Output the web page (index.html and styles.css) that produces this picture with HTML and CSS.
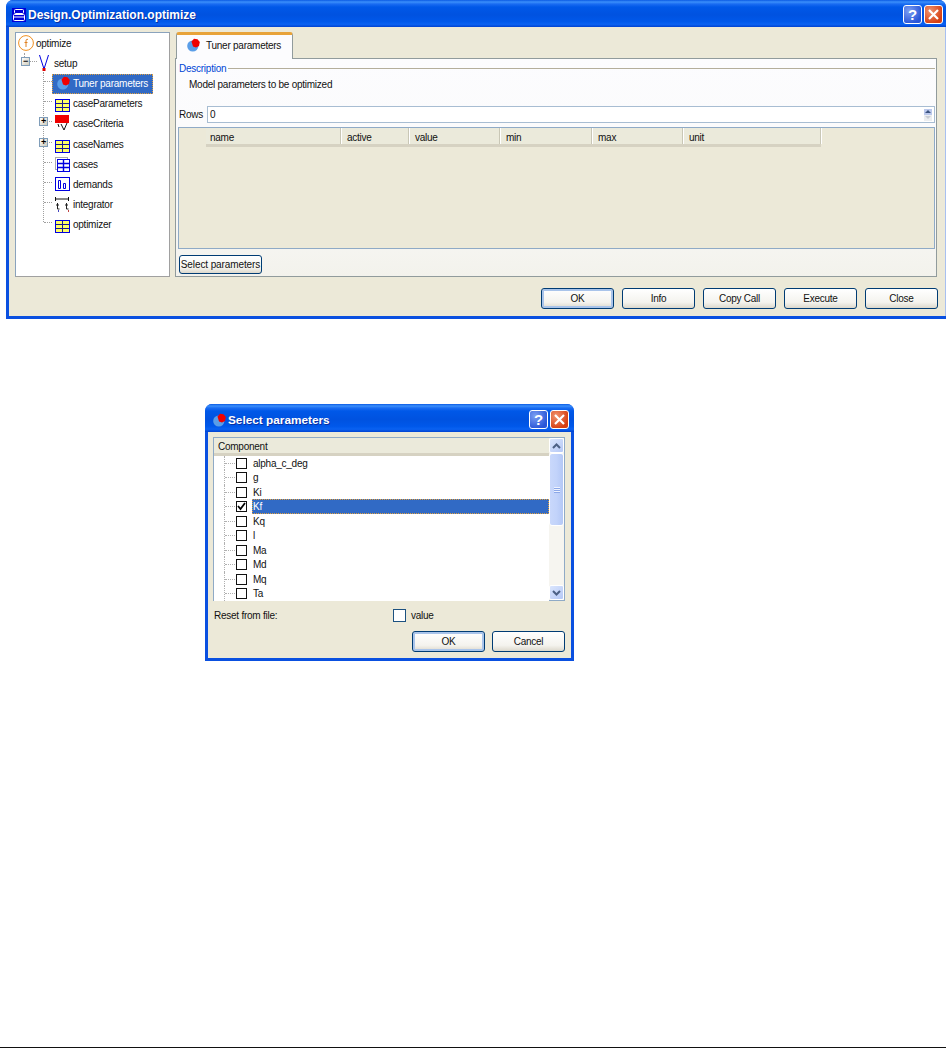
FILE: index.html
```html
<!DOCTYPE html>
<html lang="en">
<head>
<meta charset="utf-8">
<title>Design.Optimization.optimize</title>
<link rel="stylesheet" href="styles.css">
</head>
<body>
<svg class="defs" width="0" height="0" aria-hidden="true">
  <defs>
    <symbol id="i-table" viewBox="0 0 15 13">
      <rect x="0.5" y="0.5" width="14" height="12" fill="#ffff66" stroke="#0000e0"/>
      <path d="M1 4.5H14M1 8.5H14M7.5 1V12" stroke="#1a1a90" fill="none"/>
    </symbol>
    <symbol id="i-tuner" viewBox="0 0 13 14">
      <circle cx="5.8" cy="8" r="5.6" fill="#5a9ee8"/>
      <path d="M4.5 3.5 7 .8l3.5.4L12.8 4 12 8l-3 1.6-3-1.2z" fill="#f00000"/>
    </symbol>
  </defs>
</svg>

<section class="win main-win">
  <header class="titlebar">
    <svg class="title-icon" width="14" height="14" viewBox="0 0 14 14"><rect width="14" height="14" fill="#0000d8"/><rect x="2.5" y="1.5" width="9" height="4" rx="1" fill="#0000d8" stroke="#fff"/><rect x="1.5" y="6.5" width="11" height="6" rx="1" fill="#0000d8" stroke="#fff"/><path d="M2 9h10" stroke="#fff"/></svg>
    <h1 class="title-text">Design.Optimization.optimize</h1>
    <span class="cap cap-help">?</span>
    <span class="cap cap-close"><svg width="11" height="11" viewBox="0 0 11 11"><path d="M1 1l9 9M10 1l-9 9" stroke="#fff" stroke-width="2.2"/></svg></span>
  </header>
  <div class="client">
    <div class="work">
      <nav class="tree">
        <span class="guide"></span>
        <span class="guide-top"></span>
        <div class="node lv0">
          <svg class="ico" width="16" height="16" viewBox="0 0 16 16"><circle cx="8" cy="8" r="7.4" fill="#fff" stroke="#f09020"/><path d="M10 4.5C8.5 3.8 8 4.6 8 6v6M6.5 7.5h3" fill="none" stroke="#e08020"/></svg>
          <span>optimize</span>
        </div>
        <div class="node lv1">
          <span class="exp">&#8722;</span><span class="dash"></span>
          <svg class="ico" width="13" height="18" viewBox="0 0 13 18"><path d="M1.5 1 6 15 10.5 1" fill="none" stroke="#0000e0"/><rect x="4.5" y="14" width="3" height="3" fill="#e00000"/></svg>
          <span class="lab">setup</span>
        </div>
        <div class="node lv2">
          <span class="dash"></span>
          <span class="selected">
            <svg class="ico" width="13" height="14"><use href="#i-tuner"/></svg>
            <span class="lab">Tuner parameters</span>
          </span>
        </div>
        <div class="node lv2">
          <span class="dash"></span>
          <svg class="ico ico-low" width="15" height="13"><use href="#i-table"/></svg>
          <span class="lab">caseParameters</span>
        </div>
        <div class="node lv2">
          <span class="exp">+</span><span class="dash"></span>
          <svg class="ico" width="15" height="16" viewBox="0 0 15 16"><path d="M6 9 9 15 12 8M3 9l1 3" fill="none" stroke="#111"/><rect y="0" width="14" height="8" fill="#f00000"/></svg>
          <span class="lab">caseCriteria</span>
        </div>
        <div class="node lv2 node-gap">
          <span class="exp">+</span><span class="dash"></span>
          <svg class="ico ico-low" width="15" height="13"><use href="#i-table"/></svg>
          <span class="lab">caseNames</span>
        </div>
        <div class="node lv2">
          <span class="dash"></span>
          <svg class="ico" width="15" height="15" viewBox="0 0 15 15"><rect x="0.5" y="0.5" width="12" height="12" fill="#fff" stroke="#aaa"/><rect x="2.5" y="2.5" width="12" height="12" fill="#fff" stroke="#0000e0"/><path d="M3 6.5h11M3 10.5h11M8.5 3v11" stroke="#0000e0" stroke-width="1.4"/></svg>
          <span class="lab">cases</span>
        </div>
        <div class="node lv2">
          <span class="dash"></span>
          <svg class="ico" width="15" height="14" viewBox="0 0 15 14"><rect x="0.5" y="0.5" width="14" height="13" fill="#fff" stroke="#0000e0"/><path d="M3.5 3.5h2v8h-2zM8.5 6.5h2v5h-2z" fill="none" stroke="#0000e0"/></svg>
          <span class="lab">demands</span>
        </div>
        <div class="node lv2">
          <span class="dash"></span>
          <svg class="ico" width="15" height="15" viewBox="0 0 15 15"><path d="M.5 0v4M13.5 0v4M0 2h14" stroke="#111" fill="none"/><path d="M2.5 6v6h2M1 8h3M11.5 6v6h2M10 8h3" stroke="#222" fill="none"/><path d="M3.5 13v2" stroke="#4444c0"/><path d="M13.5 13v2" stroke="#c04444"/></svg>
          <span class="lab">integrator</span>
        </div>
        <div class="node lv2">
          <span class="dash"></span>
          <svg class="ico ico-low" width="15" height="13"><use href="#i-table"/></svg>
          <span class="lab">optimizer</span>
        </div>
      </nav>
      <div class="tabs">
        <div class="tab">
          <svg class="tab-icon" width="13" height="14"><use href="#i-tuner"/></svg>
          <span>Tuner parameters</span>
        </div>
        <div class="tab-panel">
          <div class="legend"><span class="legend-text">Description</span><span class="legend-line"></span></div>
          <p class="desc">Model parameters to be optimized</p>
          <div class="rows-row">
            <label class="rows-label">Rows</label>
            <div class="rows-input">
              <span>0</span>
              <span class="spin"><span class="spin-up"></span><span class="spin-down"></span></span>
            </div>
          </div>
          <div class="grid-area">
            <div class="grid-head">
              <span>name</span><span>active</span><span>value</span><span>min</span><span>max</span><span>unit</span>
            </div>
          </div>
          <button class="btn btn-small" type="button">Select parameters</button>
        </div>
      </div>
    </div>
    <div class="actions">
      <button class="btn btn-default" type="button">OK</button>
      <button class="btn" type="button">Info</button>
      <button class="btn" type="button">Copy Call</button>
      <button class="btn" type="button">Execute</button>
      <button class="btn" type="button">Close</button>
    </div>
  </div>
</section>

<section class="win dialog-win">
  <header class="titlebar">
    <svg class="title-icon-d" width="13" height="14"><use href="#i-tuner"/></svg>
    <h2 class="title-text">Select parameters</h2>
    <span class="cap cap-help">?</span>
    <span class="cap cap-close"><svg width="11" height="11" viewBox="0 0 11 11"><path d="M1 1l9 9M10 1l-9 9" stroke="#fff" stroke-width="2.2"/></svg></span>
  </header>
  <div class="client client-d">
    <div class="listbox">
      <div class="list-main">
        <div class="list-head">Component</div>
        <ul class="list-rows">
          <li class="item"><span class="check"></span><span class="item-lab">alpha_c_deg</span></li>
          <li class="item"><span class="check"></span><span class="item-lab">g</span></li>
          <li class="item"><span class="check"></span><span class="item-lab">Ki</span></li>
          <li class="item"><span class="check"><svg width="9" height="9" viewBox="0 0 9 9"><path d="M1 4l2.5 3L8 1" fill="none" stroke="#000" stroke-width="1.8"/></svg></span><span class="item-lab selected-row">Kf</span></li>
          <li class="item"><span class="check"></span><span class="item-lab">Kq</span></li>
          <li class="item"><span class="check"></span><span class="item-lab">l</span></li>
          <li class="item"><span class="check"></span><span class="item-lab">Ma</span></li>
          <li class="item"><span class="check"></span><span class="item-lab">Md</span></li>
          <li class="item"><span class="check"></span><span class="item-lab">Mq</span></li>
          <li class="item"><span class="check"></span><span class="item-lab">Ta</span></li>
        </ul>
      </div>
      <div class="scrollbar">
        <span class="sb-btn"><svg width="9" height="6" viewBox="0 0 9 6"><path d="M1 5l3.5-3.5L8 5" fill="none" stroke="#4d6185" stroke-width="2"/></svg></span>
        <span class="sb-thumb"><i></i><i></i><i></i></span>
        <span class="sb-track"></span>
        <span class="sb-btn"><svg width="9" height="6" viewBox="0 0 9 6"><path d="M1 1l3.5 3.5L8 1" fill="none" stroke="#4d6185" stroke-width="2"/></svg></span>
      </div>
    </div>
    <div class="reset-row">
      <span class="reset-label">Reset from file:</span>
      <span class="xp-check"></span>
      <span>value</span>
    </div>
    <div class="actions-d">
      <button class="btn btn-default" type="button">OK</button>
      <button class="btn" type="button">Cancel</button>
    </div>
  </div>
</section>

<hr class="page-rule">
</body>
</html>
```

FILE: styles.css
```css
* { box-sizing: border-box; }
html, body { margin: 0; padding: 0; }
body {
  width: 946px;
  height: 1048px;
  background: #fff;
  display: flex;
  flex-direction: column;
  align-items: flex-start;
  overflow: hidden;
  font: 10px/13px "Liberation Sans", Arial, sans-serif;
  letter-spacing: -0.25px;
  color: #111;
}
.defs { position: absolute; }

.win {
  display: flex;
  flex-direction: column;
  border-radius: 7px 7px 0 0;
  background: #0a50e0;
  flex: none;
}
.main-win { width: 940px; height: 319px; margin-left: 6px; }
.dialog-win { width: 369px; height: 257px; margin: 85px 0 0 205px; }

.titlebar {
  display: flex;
  align-items: center;
  flex: none;
  height: 27px;
  padding: 2px 3px 0 6px;
  border-radius: 7px 7px 0 0;
  background: linear-gradient(180deg, #0a5ae4 0, #3b8ffb 2px, #1a6cf2 4px, #0058e8 7px, #0052e0 55%, #0058ea 80%, #0a62f2 90%, #0042d0 100%);
}
.dialog-win .titlebar { height: 28px; padding: 3px 5px 0 8px; }
.title-icon { flex: none; margin-right: 2px; }
.title-icon-d { flex: none; margin-right: 2px; }
.title-text {
  margin: 0;
  flex: 1;
  font: bold 12px/16px "Liberation Sans", Arial, sans-serif;
  letter-spacing: 0;
  color: #fff;
  text-shadow: 1px 1px 0 #0a2fa0;
}
.dialog-win .title-text { font-size: 11.8px; }
.cap {
  display: flex;
  align-items: center;
  justify-content: center;
  flex: none;
  width: 19px;
  height: 19px;
  margin-left: 2px;
  border: 1px solid #fff;
  border-radius: 3px;
  color: #fff;
  font: bold 15px/16px "Liberation Sans", Arial, sans-serif;
}
.cap-help { background: radial-gradient(circle at 30% 30%, #7d9ff2, #2a56d8 75%); }
.cap-close { background: radial-gradient(circle at 30% 30%, #f0936f, #d63f12 75%); }

.client {
  flex: 1;
  display: flex;
  flex-direction: column;
  margin: 0 1px 3px 3px;
  padding: 5px 0 0 6px;
  background: #ece9d8;
}
.main-win .client { box-shadow: 1px 0 0 #a8c0f0; }

.work { display: flex; gap: 5px; height: 245px; flex: none; }

/* tree */
.tree {
  position: relative;
  width: 155px;
  flex: none;
  background: #fff;
  border: 1px solid #8aa3bd;
  border-right-color: #a0a0a0;
  border-bottom-color: #a0a0a0;
}
.guide {
  position: absolute;
  left: 27px;
  top: 39px;
  height: 150px;
  width: 16px;
  border-left: 1px dotted #a0a0a0;
}
.guide-top {
  position: absolute;
  left: 8px;
  top: 20px;
  height: 4px;
  border-left: 1px dotted #a0a0a0;
}
.node {
  position: relative;
  display: flex;
  align-items: center;
  height: 20px;
}
.node-gap { margin-top: 1px; }
.lv0 { padding-left: 2px; }
.lv0 .ico { margin-right: 2px; }
.lv1 { padding-left: 5px; }
.lv1 .dash { left: 14px; width: 7px; }
.lv1 .ico { margin-left: 17px; flex: none; }
.lv1 .lab { margin-left: 3px; }
.lv2 { padding-left: 39px; }
.lv2 .ico { margin-right: 3px; flex: none; }
.lv2 .ico-low { transform: translateY(2px); }
.lv2 .exp { left: 23px; }
.lv1 .exp { left: 5px; }
.exp {
  position: absolute;
  top: 4px;
  display: flex;
  align-items: center;
  justify-content: center;
  width: 9px;
  height: 9px;
  border: 1px solid #7f9db9;
  background: linear-gradient(135deg, #fff, #cfcbbb);
  font: bold 9px/7px "Liberation Sans", sans-serif;
  color: #000;
}
.dash {
  position: absolute;
  left: 28px;
  top: 8px;
  width: 8px;
  border-top: 1px dotted #a0a0a0;
}
.lab { white-space: nowrap; }
.lv2 .selected {
  display: flex;
  align-items: center;
  flex: none;
  position: relative;
  width: 101px;
  height: 20px;
  margin: 2px 0 0 -3px;
  padding: 0 0 2px 5px;
  background: #316ac5;
  color: #fff;
  outline: 1px dotted #e0a040;
  outline-offset: -1px;
}
.lv2 .selected .ico { margin-right: 3px; }

/* tab */
.tabs { flex: 1; display: flex; flex-direction: column; margin-right: 8px; }
.tab {
  display: flex;
  align-items: center;
  gap: 6px;
  width: 117px;
  height: 27px;
  margin: 0 0 -1px 1px;
  padding: 0 0 4px 10px;
  background: #fcfcfe;
  border: 1px solid #919b9c;
  border-top: 3px solid #e8a33a;
  border-bottom: 0;
  border-radius: 3px 3px 0 0;
  position: relative;
  z-index: 1;
  white-space: nowrap;
}
.tab-icon { flex: none; }
.tab-panel {
  flex: 1;
  display: flex;
  flex-direction: column;
  align-items: flex-start;
  padding: 1px 1px 0 2px;
  background: linear-gradient(180deg, #fcfcfe 0, #fafafa 60%, #f3f2ec 100%);
  border: 1px solid #919b9c;
}
.legend { display: flex; align-items: center; align-self: stretch; height: 16px; padding-left: 1px; }
.legend-text { color: #0046d5; margin-right: 2px; }
.legend-line { flex: 1; border-top: 1px solid #b4ae9b; }
.desc { margin: 1px 0 0 11px; height: 16px; line-height: 16px; }
.rows-row { display: flex; align-items: center; align-self: stretch; margin-top: 13px; height: 17px; }
.rows-label { width: 29px; padding-left: 1px; }
.rows-input {
  flex: 1;
  display: flex;
  align-items: center;
  justify-content: space-between;
  height: 17px;
  padding: 0 2px 0 2px;
  background: #fff;
  border: 1px solid #a8bdd2;
}
.spin { display: flex; flex-direction: column; width: 8px; }
.spin-up, .spin-down { display: block; height: 6px; position: relative; }
.spin-up { background: #bcc9ec; }
.spin-down { background: #eceef0; }
.spin-up::after, .spin-down::after {
  content: "";
  position: absolute;
  left: 1px;
  border-left: 3px solid transparent;
  border-right: 3px solid transparent;
}
.spin-up::after { top: 1px; border-bottom: 3px solid #3c5480; }
.spin-down::after { top: 1px; border-top: 3px solid #c8ccd4; }

.grid-area {
  align-self: stretch;
  height: 122px;
  margin-top: 4px;
  padding-left: 27px;
  background: #ece9d8;
  border: 1px solid #8faac6;
}
.grid-head {
  display: grid;
  grid-template-columns: 135px 68px 91px 92px 91px 138px;
  width: 615px;
  height: 19px;
  background: #ebeadb;
  border-bottom: 3px solid #d6d2c2;
}
.grid-head span {
  padding: 3px 0 0 6px;
  height: 16px;
  border-right: 1px solid #c9c7b6;
  box-shadow: 1px 0 0 #fff;
}
.grid-head span:first-child { padding-left: 4px; }
.btn {
  width: 73px;
  height: 21px;
  padding: 0;
  font: 10px/13px "Liberation Sans", Arial, sans-serif;
  letter-spacing: -0.25px;
  white-space: nowrap;
  color: #111;
  border: 1px solid #003c74;
  border-radius: 3px;
  background: linear-gradient(180deg, #fff 0, #f4f3ee 70%, #dcd8cc 100%);
}
.btn-default { box-shadow: inset 0 0 0 2px #a9c4ea; }
.btn-small { width: 83px; height: 19px; margin: 6px 0 0 1px; letter-spacing: -0.1px; }

.actions {
  display: flex;
  justify-content: flex-end;
  gap: 8px;
  margin: 11px 7px 0 0;
}

/* dialog */
.client-d { padding: 5px 0 0 5px; margin: 0 3px 3px 3px; }
.listbox {
  display: flex;
  width: 352px;
  height: 164px;
  flex: none;
  background: #fff;
  border: 1px solid #8faac6;
}
.list-main { flex: 1; min-width: 0; }
.list-head {
  height: 18px;
  padding: 2px 0 0 4px;
  background: #ebeadb;
  border-bottom: 3px solid #d6d2c2;
}
.list-rows {
  list-style: none;
  margin: 0;
  padding: 0;
  background: #fff;
}
.item {
  position: relative;
  display: flex;
  align-items: center;
  height: 14px;
  padding-left: 22px;
}
.item:nth-child(even) { height: 15px; }
.item::before {
  content: "";
  position: absolute;
  left: 10px;
  top: 0;
  bottom: 0;
  border-left: 1px dotted #b0b0b0;
}
.item::after {
  content: "";
  position: absolute;
  left: 11px;
  top: 7px;
  width: 10px;
  border-top: 1px dotted #b0b0b0;
}
.check {
  display: flex;
  align-items: center;
  justify-content: center;
  flex: none;
  width: 11px;
  height: 11px;
  border: 1.5px solid #111;
  background: #fff;
}
.item-lab { margin-left: 6px; flex: 1; }
.selected-row {
  height: 15px;
  margin-left: 5px;
  padding: 1px 0 0 1px;
  background: #316ac5;
  color: #fff;
  outline: 1px dotted #e0a040;
  outline-offset: -1px;
}
.scrollbar {
  display: flex;
  flex-direction: column;
  flex: none;
  width: 15px;
  background: #f6f5f0;
}
.sb-btn {
  display: flex;
  align-items: center;
  justify-content: center;
  flex: none;
  height: 15px;
  background: linear-gradient(135deg, #dbe6fd, #b5c8f6);
  border: 1px solid #fff;
  border-radius: 2px;
}
.sb-thumb {
  display: flex;
  flex-direction: column;
  align-items: center;
  justify-content: center;
  gap: 1px;
  flex: none;
  height: 73px;
  background: linear-gradient(90deg, #c9d8fb, #c2d3fa 50%, #b4c8f6);
  border: 1px solid #fff;
  border-radius: 3px;
}
.sb-thumb i { display: block; width: 6px; height: 1px; background: #edf2fe; box-shadow: 0 1px 0 #8ca8e8; }
.sb-track { flex: 1; }
.reset-row {
  display: flex;
  align-items: center;
  height: 14px;
  margin: 7px 0 0 1px;
}
.reset-label { width: 179px; }
.xp-check {
  width: 13px;
  height: 13px;
  margin-right: 5px;
  background: #fff;
  border: 1px solid #1c5180;
}
.actions-d { display: flex; gap: 7px; margin: 9px 0 0 199px; }

.page-rule {
  flex: none;
  width: 946px;
  height: 1px;
  margin: auto 0 0;
  border: 0;
  background: #111;
}
```
